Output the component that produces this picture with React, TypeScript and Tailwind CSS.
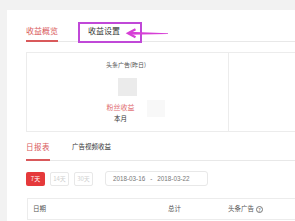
export default function App() {
  return (
    <div className="relative h-[221px] w-[295px] overflow-hidden bg-[#f2f2f2] pl-[7px] pt-[10px] font-['Noto_Sans_CJK_SC',sans-serif]">
      <div className="h-full bg-white pl-[19px]">
        {/* top tabs */}
        <div className="flex h-[32px] items-end border-b border-[#e8e8e8]">
          <div className="-mb-px border-b-2 border-[#d9595b] pb-[5px] text-[8px] leading-[8px] text-[#d9595b]">收益概览</div>
          <div className="-mb-px ml-[30px] border-b-2 border-transparent pb-[5px] text-[8px] leading-[8px] text-[#333]">收益设置</div>
        </div>

        {/* summary panel */}
        <div className="mt-[10px] flex h-[80px] border border-r-0 border-[#ececec]">
          <div className="flex w-[202px] flex-col items-center border-r border-[#ececec] pt-[9px]">
            <div className="mr-[3px] text-[6px] leading-[6px] text-[#555]">头条广告(昨日)</div>
            <div className="mt-[10px] h-[18px] w-[19px] bg-[#ebebeb]" />
            <div className="ml-[16px] mt-[4px] flex items-start gap-[12px]">
              <div className="flex flex-col items-center pt-[4px]">
                <div className="text-[7px] leading-[7px] text-[#e06a6e]">粉丝收益</div>
                <div className="mt-[4px] text-[6.5px] leading-[7px] text-[#333]">本月</div>
              </div>
              <div className="h-[17px] w-[18px] bg-[#f8f8f8]" />
            </div>
          </div>
          <div className="flex-1" />
        </div>

        {/* report tabs */}
        <div className="flex h-[29px] items-end border-b border-[#e8e8e8]">
          <div className="-mb-px border-b-2 border-[#d9595b] pb-[9px] text-[7.5px] leading-[7px] tracking-[0.5px] text-[#d9595b]">日报表</div>
          <div className="-mb-px ml-[22px] border-b-2 border-transparent pb-[9px] text-[6.5px] leading-[7px] text-[#333]">广告视频收益</div>
        </div>

        {/* range filters */}
        <div className="mt-[10px] flex h-[15px] items-center">
          <div className="flex gap-[5px]">
            <div className="flex h-[14px] w-[19px] items-center justify-center rounded-[2px] bg-[#e5393b] text-[6px] text-white">7天</div>
            <div className="flex h-[14px] w-[19px] items-center justify-center rounded-[2px] border border-[#e8e8e8] text-[6px] text-[#cfcfcf]">14天</div>
            <div className="flex h-[14px] w-[19px] items-center justify-center rounded-[2px] border border-[#e8e8e8] text-[6px] text-[#cfcfcf]">30天</div>
          </div>
          <div className="ml-[12px] flex h-[15px] w-[103px] items-center rounded-[3px] border border-[#e8e8e8] pl-[7px] font-['Liberation_Sans',sans-serif] text-[6.3px] text-[#777]">
            2018-03-16
            <span className="mx-[5px]">-</span>
            2018-03-22
          </div>
        </div>

        {/* table header */}
        <div className="ml-px mt-[12px] flex h-[22px] items-center border border-r-0 border-[#ececec] text-[6.5px] text-[#555]">
          <div className="w-[140px] pl-[5px]">日期</div>
          <div className="w-[60px]">总计</div>
          <div className="flex items-center gap-[2px]">
            头条广告
            <span className="flex h-[7px] w-[7px] items-center justify-center rounded-full border border-[#777] text-[5px] leading-none">?</span>
          </div>
        </div>
      </div>

      {/* annotation overlay */}
      <div className="absolute left-[78px] top-[22px] h-[21px] w-[64px] border-2 border-[#c048d8]" />
      <svg className="absolute left-[124px] top-[26px]" width="48" height="14" viewBox="0 0 48 14">
        <polygon points="5,5.8 44,7.3 44,7.9 5,8.8" fill="#d63fd6" />
        <polyline points="11.5,3.2 4,7.3 11.5,11.2" fill="none" stroke="#d63fd6" strokeWidth="2.2" strokeLinejoin="miter" />
      </svg>
    </div>
  );
}
